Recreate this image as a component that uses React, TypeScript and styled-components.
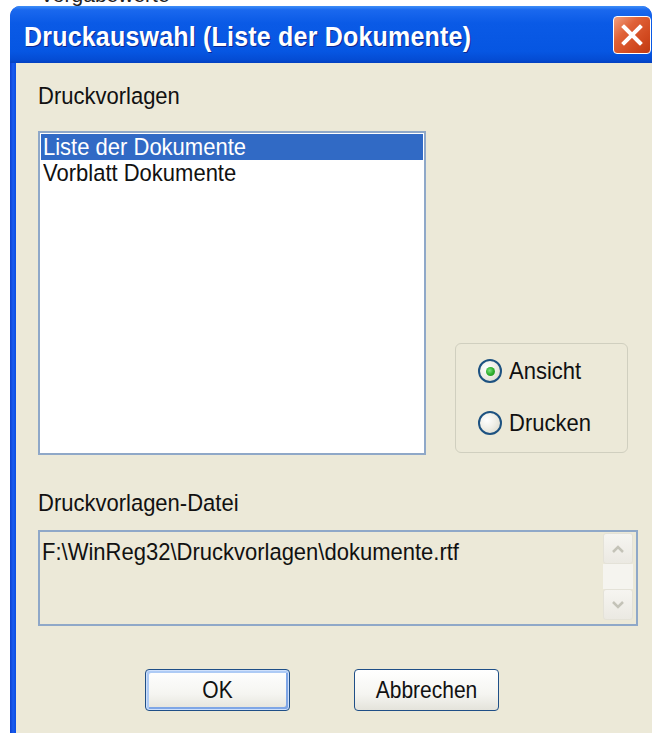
import styled, { createGlobalStyle, css } from "styled-components"

const Global = createGlobalStyle`
  html, body {
    margin: 0;
    padding: 0;
    background: #fff;
    overflow: hidden;
  }
  * { box-sizing: border-box; }
`

const FONT = `"Liberation Sans", Arial, sans-serif`

// dialog text is drawn a bit taller than the stock font
const tall = css`
  display: inline-block;
  transform: scaleY(1.12);
  transform-origin: center;
`

const App = () => {
  return (
    <Page>
      <Global />
      <TopStrip>
        <StripText>Vorgabewerte</StripText>
      </TopStrip>
      <Win>
        <TitleBar>
          <Title>Druckauswahl (Liste der Dokumente)</Title>
          <CloseBtn>
            <svg width="22" height="22" viewBox="0 0 22 22">
              <path d="M3 3 L19 19 M19 3 L3 19" stroke="#fff" strokeWidth="4" strokeLinecap="square" />
            </svg>
          </CloseBtn>
        </TitleBar>
        <Body>
          <Label>Druckvorlagen</Label>
          <Row>
            <ListBox>
              <Item $selected><Txt>Liste der Dokumente</Txt></Item>
              <Item><Txt>Vorblatt Dokumente</Txt></Item>
            </ListBox>
            <Group>
              <RadioRow>
                <Radio $checked />
                <Txt>Ansicht</Txt>
              </RadioRow>
              <RadioRow>
                <Radio />
                <Txt>Drucken</Txt>
              </RadioRow>
            </Group>
          </Row>
          <Label2>Druckvorlagen-Datei</Label2>
          <TextBox>
            <PathText>F:\WinReg32\Druckvorlagen\dokumente.rtf</PathText>
            <ScrollBar>
              <ScrollBtn>
                <svg width="14" height="10" viewBox="0 0 14 10">
                  <path d="M2 8 L7 3 L12 8" stroke="#c4c3b8" strokeWidth="2.5" fill="none" />
                </svg>
              </ScrollBtn>
              <Track />
              <ScrollBtn>
                <svg width="14" height="10" viewBox="0 0 14 10">
                  <path d="M2 2 L7 7 L12 2" stroke="#c4c3b8" strokeWidth="2.5" fill="none" />
                </svg>
              </ScrollBtn>
            </ScrollBar>
          </TextBox>
          <Buttons>
            <Button $default><Txt>OK</Txt></Button>
            <Button><Txt>Abbrechen</Txt></Button>
          </Buttons>
        </Body>
      </Win>
    </Page>
  )
}

export default App

const Page = styled.div`
  width: 652px;
  height: 733px;
  display: flex;
  flex-direction: column;
  font-family: ${FONT};
`
const TopStrip = styled.div`
  height: 6px;
  overflow: hidden;
  display: flex;
  align-items: flex-end;
  padding-left: 40px;
`
const StripText = styled.div`
  font-size: 21px;
  line-height: 24px;
  color: #222;
  flex: none;
  margin-bottom: -1px;
`
const Win = styled.div`
  flex: 1;
  margin-left: 10px;
  display: flex;
  flex-direction: column;
  border-radius: 10px 10px 0 0;
  background: linear-gradient(to right, #0a3fd0 0px, #1a5cf0 3px, #0a4ee0 6px);
  overflow: hidden;
`
const TitleBar = styled.div`
  height: 57px;
  display: flex;
  align-items: center;
  justify-content: space-between;
  padding: 4px 1px 0 14px;
  background: linear-gradient(to bottom, #3e8ef8 0%, #1a68ee 7%, #0a5ae6 30%, #0656e2 80%, #044cd4 94%, #0340c0 100%);
`
const Title = styled.div`
  color: #fff;
  font-weight: bold;
  font-size: 25px;
  letter-spacing: 0.2px;
  text-shadow: 1px 1px 0 #0c2a92;
  ${tall};
`
const CloseBtn = styled.div`
  width: 38px;
  height: 38px;
  margin-top: -4px;
  border: 1px solid #fff;
  border-radius: 4px;
  display: flex;
  align-items: center;
  justify-content: center;
  background: linear-gradient(135deg, #f0a080 0%, #e06238 35%, #d24a20 70%, #c03a12 100%);
`
const Body = styled.div`
  flex: 1;
  margin-left: 6px;
  background: #ece9d8;
  padding: 21px 14px 0 22px;
  display: flex;
  flex-direction: column;
`
const Txt = styled.span`
  ${tall};
`
const Label = styled.div`
  font-size: 22px;
  line-height: 24px;
  color: #111;
  ${tall};
`
const Label2 = styled(Label)`
  margin-top: 36px;
`
const Row = styled.div`
  margin-top: 23px;
  display: flex;
  align-items: flex-end;
  gap: 29px;
`
const ListBox = styled.div`
  width: 388px;
  height: 324px;
  background: #fff;
  border: 2px solid #8fa8c8;
  padding: 1px;
`
const Item = styled.div<{ $selected?: boolean }>`
  height: 26px;
  padding-left: 2px;
  font-size: 22px;
  line-height: 26px;
  color: ${(p) => (p.$selected ? "#fff" : "#111")};
  background: ${(p) => (p.$selected ? "#316ac5" : "transparent")};
`
const Group = styled.div`
  width: 173px;
  height: 110px;
  margin-bottom: 2px;
  border: 1px solid #d0cfbf;
  border-radius: 6px;
  padding: 15px 0 0 22px;
  display: flex;
  flex-direction: column;
  gap: 28px;
`
const RadioRow = styled.div`
  display: flex;
  align-items: center;
  gap: 7px;
  height: 24px;
  font-size: 22px;
  color: #111;
`
const Radio = styled.div<{ $checked?: boolean }>`
  width: 24px;
  height: 24px;
  border-radius: 50%;
  border: 2px solid #1d5281;
  background: radial-gradient(circle at 35% 35%, #ffffff 0%, #f0efe8 45%, #d6d4c6 100%);
  display: flex;
  align-items: center;
  justify-content: center;
  &::after {
    content: "";
    display: ${(p) => (p.$checked ? "block" : "none")};
    width: 9px;
    height: 9px;
    border-radius: 50%;
    background: radial-gradient(circle at 40% 40%, #7fe07f 0%, #2fb02f 50%, #1a8a1a 100%);
  }
`
const TextBox = styled.div`
  margin-top: 15px;
  width: 600px;
  height: 96px;
  border: 2px solid #8fa8c8;
  display: flex;
  justify-content: space-between;
  padding: 1px 3px 4px 2px;
`
const PathText = styled.div`
  font-size: 22px;
  line-height: 24px;
  margin-top: 6px;
  color: #111;
  align-self: flex-start;
  ${tall};
  transform-origin: top;
`
const ScrollBar = styled.div`
  width: 30px;
  display: flex;
  flex-direction: column;
`
const ScrollBtn = styled.div`
  height: 31px;
  border: 1px solid #e4e2d8;
  border-radius: 3px;
  background: linear-gradient(to bottom, #f6f5f1, #ebe9e2);
  display: flex;
  align-items: center;
  justify-content: center;
`
const Track = styled.div`
  flex: 1;
  background: #f5f4ef;
`
const Buttons = styled.div`
  margin-top: 43px;
  padding-left: 107px;
  display: flex;
  gap: 64px;
`
const Button = styled.div<{ $default?: boolean }>`
  width: 145px;
  height: 42px;
  border: 1px solid #1f4f87;
  border-radius: 4px;
  display: flex;
  align-items: center;
  justify-content: center;
  font-size: 21px;
  color: #111;
  background: linear-gradient(to bottom, #ffffff 0%, #f5f5f1 60%, #e4e3db 100%);
  box-shadow: ${(p) =>
    p.$default
      ? "inset 0 0 0 1px #cfe0fb, inset 2px 2px 0 1px #aecbf5, inset -2px -2px 0 1px #7fa6e6"
      : "none"};
`
